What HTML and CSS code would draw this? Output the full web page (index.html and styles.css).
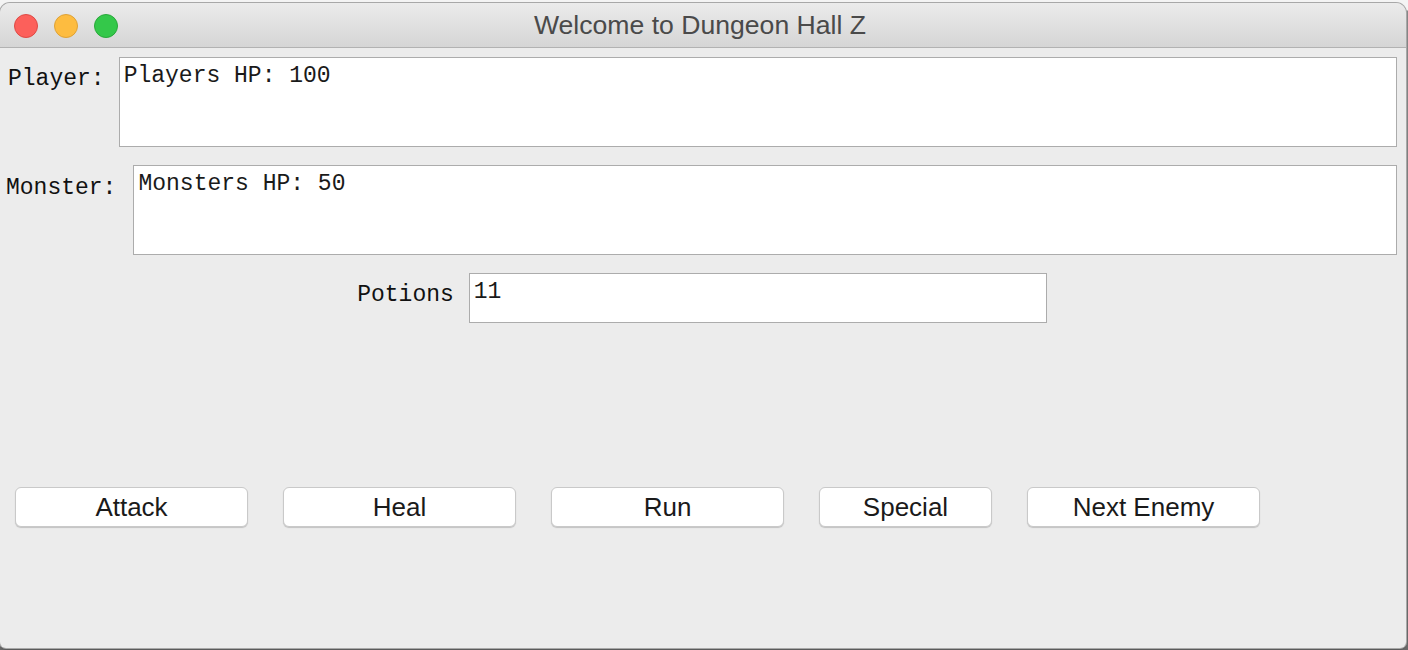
FILE: index.html
```html
<!DOCTYPE html>
<html>
<head>
<meta charset="utf-8">
<title>Welcome to Dungeon Hall Z</title>
<link rel="stylesheet" href="styles.css">
</head>
<body>
<div class="window">
  <div class="titlebar">
    <div class="lights">
      <span class="light red"></span>
      <span class="light yellow"></span>
      <span class="light green"></span>
    </div>
    <div class="title">Welcome to Dungeon Hall Z</div>
    <div class="spacer"></div>
  </div>
  <div class="content">
    <div class="row row-player">
      <span class="label">Player:</span>
      <div class="field field-big">Players HP: 100</div>
    </div>
    <div class="row row-monster">
      <span class="label">Monster:</span>
      <div class="field field-big">Monsters HP: 50</div>
    </div>
    <div class="row row-potions">
      <span class="label">Potions</span>
      <div class="field field-small">11</div>
    </div>
    <div class="buttons">
      <button class="btn">Attack</button>
      <button class="btn">Heal</button>
      <button class="btn">Run</button>
      <button class="btn btn-narrow">Special</button>
      <button class="btn">Next Enemy</button>
    </div>
  </div>
</div>
</body>
</html>
```

FILE: styles.css
```css
html, body {
  margin: 0;
  padding: 0;
}
body {
  width: 1408px;
  height: 650px;
  background: #6e6e6e;
  background: linear-gradient(to bottom, #f4f4f4 0, #f4f4f4 10px, #8a8a8a 11px, #6a6a6a 100%);
  overflow: hidden;
  padding-top: 3px;
  box-sizing: border-box;
}
.window {
  width: 1406px;
  height: 645px;
  background: #ececec;
  border-radius: 10px 10px 6px 6px;
  box-shadow: 0 0 0 1px #a8a8a8, 0 1px 2px rgba(0,0,0,0.5);
  overflow: hidden;
  display: flex;
  flex-direction: column;
}
.titlebar {
  height: 44px;
  flex: none;
  background: linear-gradient(to bottom, #ebebeb 0%, #d5d5d5 100%);
  border-bottom: 1px solid #b2b2b2;
  display: grid;
  grid-template-columns: 1fr auto 1fr;
  align-items: center;
}
.lights {
  display: flex;
  gap: 16px;
  padding-left: 14px;
  padding-top: 1px;
}
.light {
  width: 22px;
  height: 22px;
  border-radius: 50%;
  border: 1px solid;
}
.red { background: #fc605b; border-color: #de4a45; }
.yellow { background: #fdbc40; border-color: #dea236; }
.green { background: #34c84a; border-color: #29a83a; }
.title {
  font-family: "Liberation Sans", Arial, sans-serif;
  font-size: 26.6px;
  color: #4a4a4a;
  padding-right: 6px;
}
.content {
  flex: 1;
  padding-top: 9px;
  display: flex;
  flex-direction: column;
}
.row {
  display: flex;
  align-items: flex-start;
  padding-right: 9px;
}
.label {
  font-family: "Liberation Mono", "Courier New", monospace;
  font-size: 23px;
  line-height: 27px;
  color: #111;
  white-space: nowrap;
}
.field {
  background: #fff;
  border: 1px solid #acacac;
  box-sizing: border-box;
  font-family: "Liberation Mono", "Courier New", monospace;
  font-size: 23px;
  line-height: 27px;
  color: #1a1a1a;
  padding: 5px 4px;
  white-space: pre;
}
.field-big {
  flex: 1;
  height: 90px;
}
.field-small {
  width: 578px;
  height: 50px;
}
.row-player {
  padding-left: 8px;
  gap: 14px;
}
.row-player .label { margin-top: 9px; }
.row-monster {
  margin-top: 18px;
  padding-left: 6px;
  gap: 17px;
}
.row-monster .label { margin-top: 10px; }
.row-potions {
  margin-top: 18px;
  justify-content: center;
  gap: 15px;
  padding-right: 2px;
  padding-left: 0;
}
.row-potions .label { margin-top: 9px; }
.buttons {
  margin-top: 164px;
  padding-left: 15px;
  display: flex;
  gap: 35px;
}
.btn {
  width: 233px;
  height: 40px;
  background: #fff;
  border: 1px solid #c9c9c9;
  border-radius: 6px;
  box-shadow: 0 1px 1px rgba(0,0,0,0.18);
  font-family: "Liberation Sans", Arial, sans-serif;
  font-size: 26px;
  color: #1a1a1a;
  padding: 0;
  line-height: 38px;
}
.btn-narrow {
  width: 173px;
}
```
